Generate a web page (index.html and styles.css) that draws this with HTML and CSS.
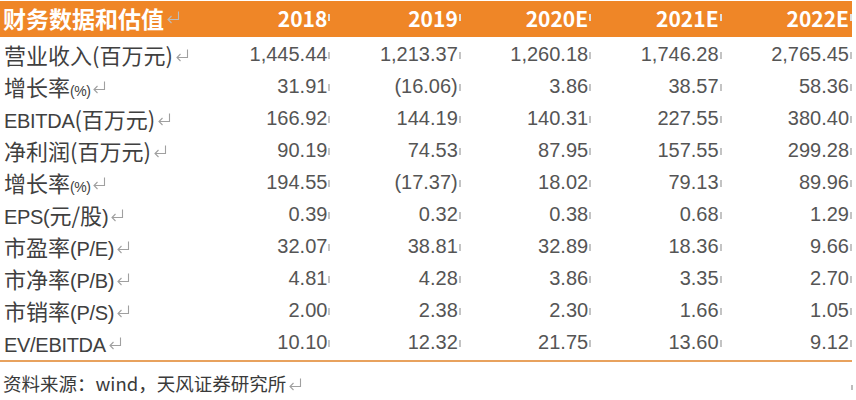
FILE: index.html
```html
<!DOCTYPE html>
<html lang="zh">
<head>
<meta charset="utf-8">
<link rel="stylesheet" href="styles.css">
</head>
<body>
<table class="fin">
  <thead>
    <tr>
      <th class="title">财务数据和估值<svg class="ret" viewBox="0 0 14 14"><path d="M12.5 1.5V9.5H2M5.5 6L2 9.5L5.5 13"/></svg></th>
      <th>2018<i class="m"></i></th>
      <th>2019<i class="m"></i></th>
      <th>2020E<i class="m"></i></th>
      <th>2021E<i class="m"></i></th>
      <th>2022E<i class="m"></i></th>
    </tr>
  </thead>
  <tbody>
    <tr><td class="lab">营业收入(百万元)<svg class="ret" viewBox="0 0 14 14"><path d="M12.5 1.5V9.5H2M5.5 6L2 9.5L5.5 13"/></svg></td><td>1,445.44<i class="m"></i></td><td>1,213.37<i class="m"></i></td><td>1,260.18<i class="m"></i></td><td>1,746.28<i class="m"></i></td><td>2,765.45<i class="m"></i></td></tr>
    <tr><td class="lab">增长率<span class="sm">(%)</span><svg class="ret" viewBox="0 0 14 14"><path d="M12.5 1.5V9.5H2M5.5 6L2 9.5L5.5 13"/></svg></td><td>31.91<i class="m"></i></td><td>(16.06)<i class="m"></i></td><td>3.86<i class="m"></i></td><td>38.57<i class="m"></i></td><td>58.36<i class="m"></i></td></tr>
    <tr><td class="lab"><span class="lt">EBITDA</span>(百万元)<svg class="ret" viewBox="0 0 14 14"><path d="M12.5 1.5V9.5H2M5.5 6L2 9.5L5.5 13"/></svg></td><td>166.92<i class="m"></i></td><td>144.19<i class="m"></i></td><td>140.31<i class="m"></i></td><td>227.55<i class="m"></i></td><td>380.40<i class="m"></i></td></tr>
    <tr><td class="lab">净利润(百万元)<svg class="ret" viewBox="0 0 14 14"><path d="M12.5 1.5V9.5H2M5.5 6L2 9.5L5.5 13"/></svg></td><td>90.19<i class="m"></i></td><td>74.53<i class="m"></i></td><td>87.95<i class="m"></i></td><td>157.55<i class="m"></i></td><td>299.28<i class="m"></i></td></tr>
    <tr><td class="lab">增长率<span class="sm">(%)</span><svg class="ret" viewBox="0 0 14 14"><path d="M12.5 1.5V9.5H2M5.5 6L2 9.5L5.5 13"/></svg></td><td>194.55<i class="m"></i></td><td>(17.37)<i class="m"></i></td><td>18.02<i class="m"></i></td><td>79.13<i class="m"></i></td><td>89.96<i class="m"></i></td></tr>
    <tr><td class="lab"><span class="lt">EPS(</span>元/股<span class="lt">)</span><svg class="ret" viewBox="0 0 14 14"><path d="M12.5 1.5V9.5H2M5.5 6L2 9.5L5.5 13"/></svg></td><td>0.39<i class="m"></i></td><td>0.32<i class="m"></i></td><td>0.38<i class="m"></i></td><td>0.68<i class="m"></i></td><td>1.29<i class="m"></i></td></tr>
    <tr><td class="lab">市盈率<span class="lt">(P/E)</span><svg class="ret" viewBox="0 0 14 14"><path d="M12.5 1.5V9.5H2M5.5 6L2 9.5L5.5 13"/></svg></td><td>32.07<i class="m"></i></td><td>38.81<i class="m"></i></td><td>32.89<i class="m"></i></td><td>18.36<i class="m"></i></td><td>9.66<i class="m"></i></td></tr>
    <tr><td class="lab">市净率<span class="lt">(P/B)</span><svg class="ret" viewBox="0 0 14 14"><path d="M12.5 1.5V9.5H2M5.5 6L2 9.5L5.5 13"/></svg></td><td>4.81<i class="m"></i></td><td>4.28<i class="m"></i></td><td>3.86<i class="m"></i></td><td>3.35<i class="m"></i></td><td>2.70<i class="m"></i></td></tr>
    <tr><td class="lab">市销率<span class="lt">(P/S)</span><svg class="ret" viewBox="0 0 14 14"><path d="M12.5 1.5V9.5H2M5.5 6L2 9.5L5.5 13"/></svg></td><td>2.00<i class="m"></i></td><td>2.38<i class="m"></i></td><td>2.30<i class="m"></i></td><td>1.66<i class="m"></i></td><td>1.05<i class="m"></i></td></tr>
    <tr class="last"><td class="lab"><span class="lt">EV/EBITDA</span><svg class="ret" viewBox="0 0 14 14"><path d="M12.5 1.5V9.5H2M5.5 6L2 9.5L5.5 13"/></svg></td><td>10.10<i class="m"></i></td><td>12.32<i class="m"></i></td><td>21.75<i class="m"></i></td><td>13.60<i class="m"></i></td><td>9.12<i class="m"></i></td></tr>
  </tbody>
</table>
<p class="src">资料来源：wind，天风证券研究所<svg class="ret" viewBox="0 0 14 14"><path d="M12.5 1.5V9.5H2M5.5 6L2 9.5L5.5 13"/></svg></p>
<span class="dot"></span>
</body>
</html>
```
FILE: styles.css
```css
html, body {
  margin: 0;
  padding: 0;
  background: #ffffff;
}
body {
  width: 856px;
  height: 400px;
  overflow: hidden;
  position: relative;
  font-family: "Liberation Sans", Arial, "Noto Sans CJK SC", sans-serif;
}
.fin {
  border-collapse: collapse;
  width: 852px;
  table-layout: fixed;
  margin-top: 1px;
}
.fin th, .fin td {
  padding: 0;
  text-align: right;
  white-space: nowrap;
  vertical-align: top;
}
.fin th:first-child, .fin td:first-child { width: 197px; text-align: left; }
.fin span, .fin i, .src span { line-height: 1; }
.fin thead tr { background: #ef8627; }
.fin th {
  height: 36px;
  color: #ffffff;
  font-size: 21px;
  font-weight: bold;
  font-family: "Noto Sans CJK SC", sans-serif;
  line-height: 34px;
  overflow: hidden;
}
.fin th.title {
  font-size: 23px;
  padding-left: 3px;
}
.fin td {
  height: 32px;
  box-sizing: border-box;
  color: #555555;
  font-size: 20px;
  line-height: 26px;
  padding-top: 4px;
  overflow: hidden;
}
.fin td.lab {
  color: #404040;
  font-family: "Noto Sans CJK SC", sans-serif;
  font-size: 22px;
  padding-left: 4px;
}
.lab .lt {
  font-family: "Liberation Sans", Arial, sans-serif;
  font-size: 20px;
  letter-spacing: -0.3px;
}
.lab .sm {
  font-family: "Liberation Sans", Arial, sans-serif;
  font-size: 14px;
  letter-spacing: -0.5px;
}
.fin tr.last td { border-bottom: 2px solid #e8a25e; height: 36px; }
.ret {
  display: inline-block;
  width: 14px;
  height: 14px;
  margin-left: 2px;
  vertical-align: 2px;
  fill: none;
  stroke: #a0a0a0;
  stroke-width: 1.1;
}
th .ret { stroke: #bdbdbd; vertical-align: 4px; }
.m {
  display: inline-block;
  width: 2px;
  height: 7px;
  background: #c4c4c4;
  margin-left: 1px;
  vertical-align: 2px;
}
th .m { background: #e0e0e0; height: 7px; vertical-align: 6px; }
.src {
  margin: 0;
  padding: 9px 0 0 3px;
  font-family: "Noto Sans CJK SC", sans-serif;
  font-size: 18.5px;
  line-height: 24px;
  color: #3a3a3a;
}
.src .ret { vertical-align: 0; }
.dot {
  position: absolute;
  left: 851px;
  top: 385px;
  width: 2px;
  height: 5px;
  background: #bdbdbd;
}
```
